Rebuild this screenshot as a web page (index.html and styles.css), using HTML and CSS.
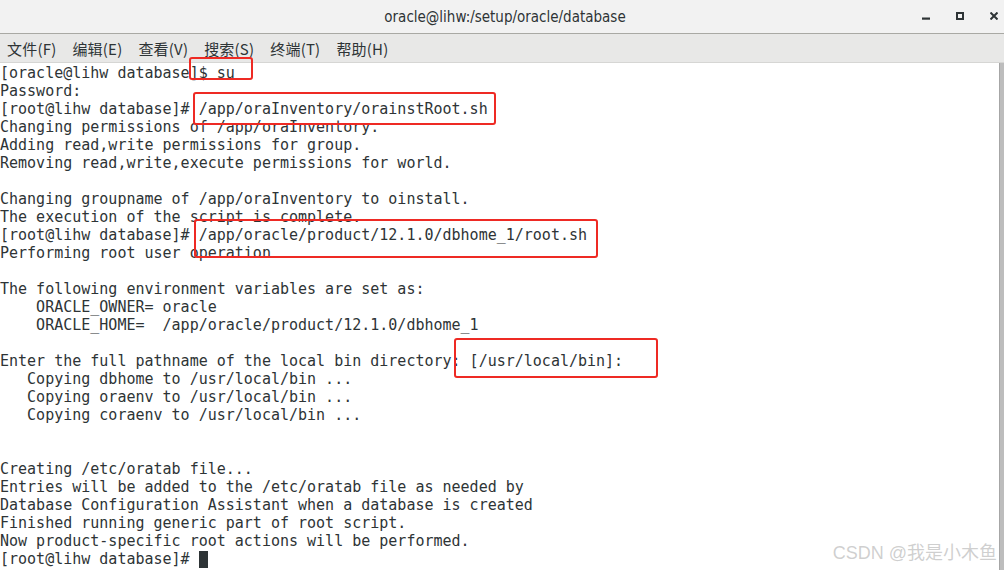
FILE: index.html
```html
<!DOCTYPE html>
<html lang="zh-CN">
<head>
    <meta charset="UTF-8">
    <title>oracle@lihw:/setup/oracle/database</title>
    <link rel="stylesheet" href="styles.css">
</head>
<body>
    <div class="window">
        <div class="titlebar">
            <span class="title">oracle@lihw:/setup/oracle/database</span>
            <div class="controls">
                <svg width="8" height="8" viewBox="0 0 8 8"><rect x="0" y="5.5" width="8" height="2.2" fill="#2e3436"/></svg>
                <svg width="8" height="8" viewBox="0 0 8 8"><rect x="1" y="1" width="6" height="6" fill="none" stroke="#2e3436" stroke-width="2"/></svg>
                <svg width="8" height="8" viewBox="0 0 8 8"><path d="M0.5 0.5 L7.5 7.5 M7.5 0.5 L0.5 7.5" stroke="#2e3436" stroke-width="2"/></svg>
            </div>
        </div>

        <div class="menubar">
            <span>文件(F)</span>
            <span>编辑(E)</span>
            <span>查看(V)</span>
            <span>搜索(S)</span>
            <span>终端(T)</span>
            <span>帮助(H)</span>
        </div>

        <div class="terminal">
<pre class="output">[oracle@lihw database]$ su
Password:
[root@lihw database]# /app/oraInventory/orainstRoot.sh
Changing permissions of /app/oraInventory.
Adding read,write permissions for group.
Removing read,write,execute permissions for world.

Changing groupname of /app/oraInventory to oinstall.
The execution of the script is complete.
[root@lihw database]# /app/oracle/product/12.1.0/dbhome_1/root.sh
Performing root user operation

The following environment variables are set as:
    ORACLE_OWNER= oracle
    ORACLE_HOME=  /app/oracle/product/12.1.0/dbhome_1

Enter the full pathname of the local bin directory: [/usr/local/bin]:
   Copying dbhome to /usr/local/bin ...
   Copying oraenv to /usr/local/bin ...
   Copying coraenv to /usr/local/bin ...


Creating /etc/oratab file...
Entries will be added to the /etc/oratab file as needed by
Database Configuration Assistant when a database is created
Finished running generic part of root script.
Now product-specific root actions will be performed.
[root@lihw database]# <span class="cursor"></span></pre>

            <!-- red annotation boxes -->
            <div class="mark mark-su"></div>
            <div class="mark mark-orainst"></div>
            <div class="mark mark-rootsh"></div>
            <div class="mark mark-bin"></div>

            <div class="scrollbar"></div>
            <div class="watermark">CSDN @我是小木鱼</div>
        </div>
    </div>
</body>
</html>
```

FILE: styles.css
```css
body {
    margin: 0;
    background: #ffffff;
    font-family: "DejaVu Sans", "Noto Sans CJK SC", sans-serif;
}
.window {
    width: 1004px;
    height: 570px;
    display: flex;
    flex-direction: column;
    overflow: hidden;
}
.titlebar {
    height: 33px;
    background: #f2f2f2;
    border-bottom: 1px solid #a9a9a4;
    display: flex;
    align-items: center;
    justify-content: center;
    position: relative;
}
.title {
    font-family: "DejaVu Sans Condensed", "DejaVu Sans", sans-serif;
    font-size: 15px;
    color: #2e3436;
    margin-left: 6px;
}
.controls {
    position: absolute;
    right: 6px;
    top: 12px;
    display: flex;
    gap: 26px;
}
.menubar {
    height: 28px;
    background: #e8e8e7;
    border-bottom: 1px solid #d6d6d4;
    display: flex;
    align-items: center;
    padding-left: 7px;
    gap: 16px;
    font-family: "Noto Sans CJK SC", sans-serif;
    font-size: 15px;
    letter-spacing: 0.2px;
    color: #2e3436;
}
.terminal {
    flex: 1;
    position: relative;
    background: #ffffff;
}
.output {
    margin: 0;
    padding-top: 1px;
    font-family: "DejaVu Sans Mono", monospace;
    font-size: 15px;
    line-height: 18px;
    color: #2e3436;
}
.cursor {
    display: inline-block;
    width: 9px;
    height: 17px;
    background: #2e3436;
    vertical-align: -4px;
}
.mark {
    position: absolute;
    border: 2.5px solid #ee2a24;
    border-radius: 3px;
}
.mark-su {
    left: 189px;
    top: -6px;
    width: 60px;
    height: 19px;
}
.mark-orainst {
    left: 193px;
    top: 29px;
    width: 299px;
    height: 29px;
}
.mark-rootsh {
    left: 194px;
    top: 156px;
    width: 400px;
    height: 35px;
}
.mark-bin {
    left: 454px;
    top: 275px;
    width: 200px;
    height: 36px;
}
.scrollbar {
    position: absolute;
    right: 0;
    top: 0;
    bottom: 0;
    width: 4px;
    background: #bdbdbd;
    border-left: 1px solid #a6a6a6;
}
.watermark {
    position: absolute;
    right: 7px;
    bottom: 6px;
    font-family: "Liberation Sans", "Noto Sans CJK SC", sans-serif;
    font-size: 18px;
    color: rgba(160, 160, 160, 0.5);
}
```
